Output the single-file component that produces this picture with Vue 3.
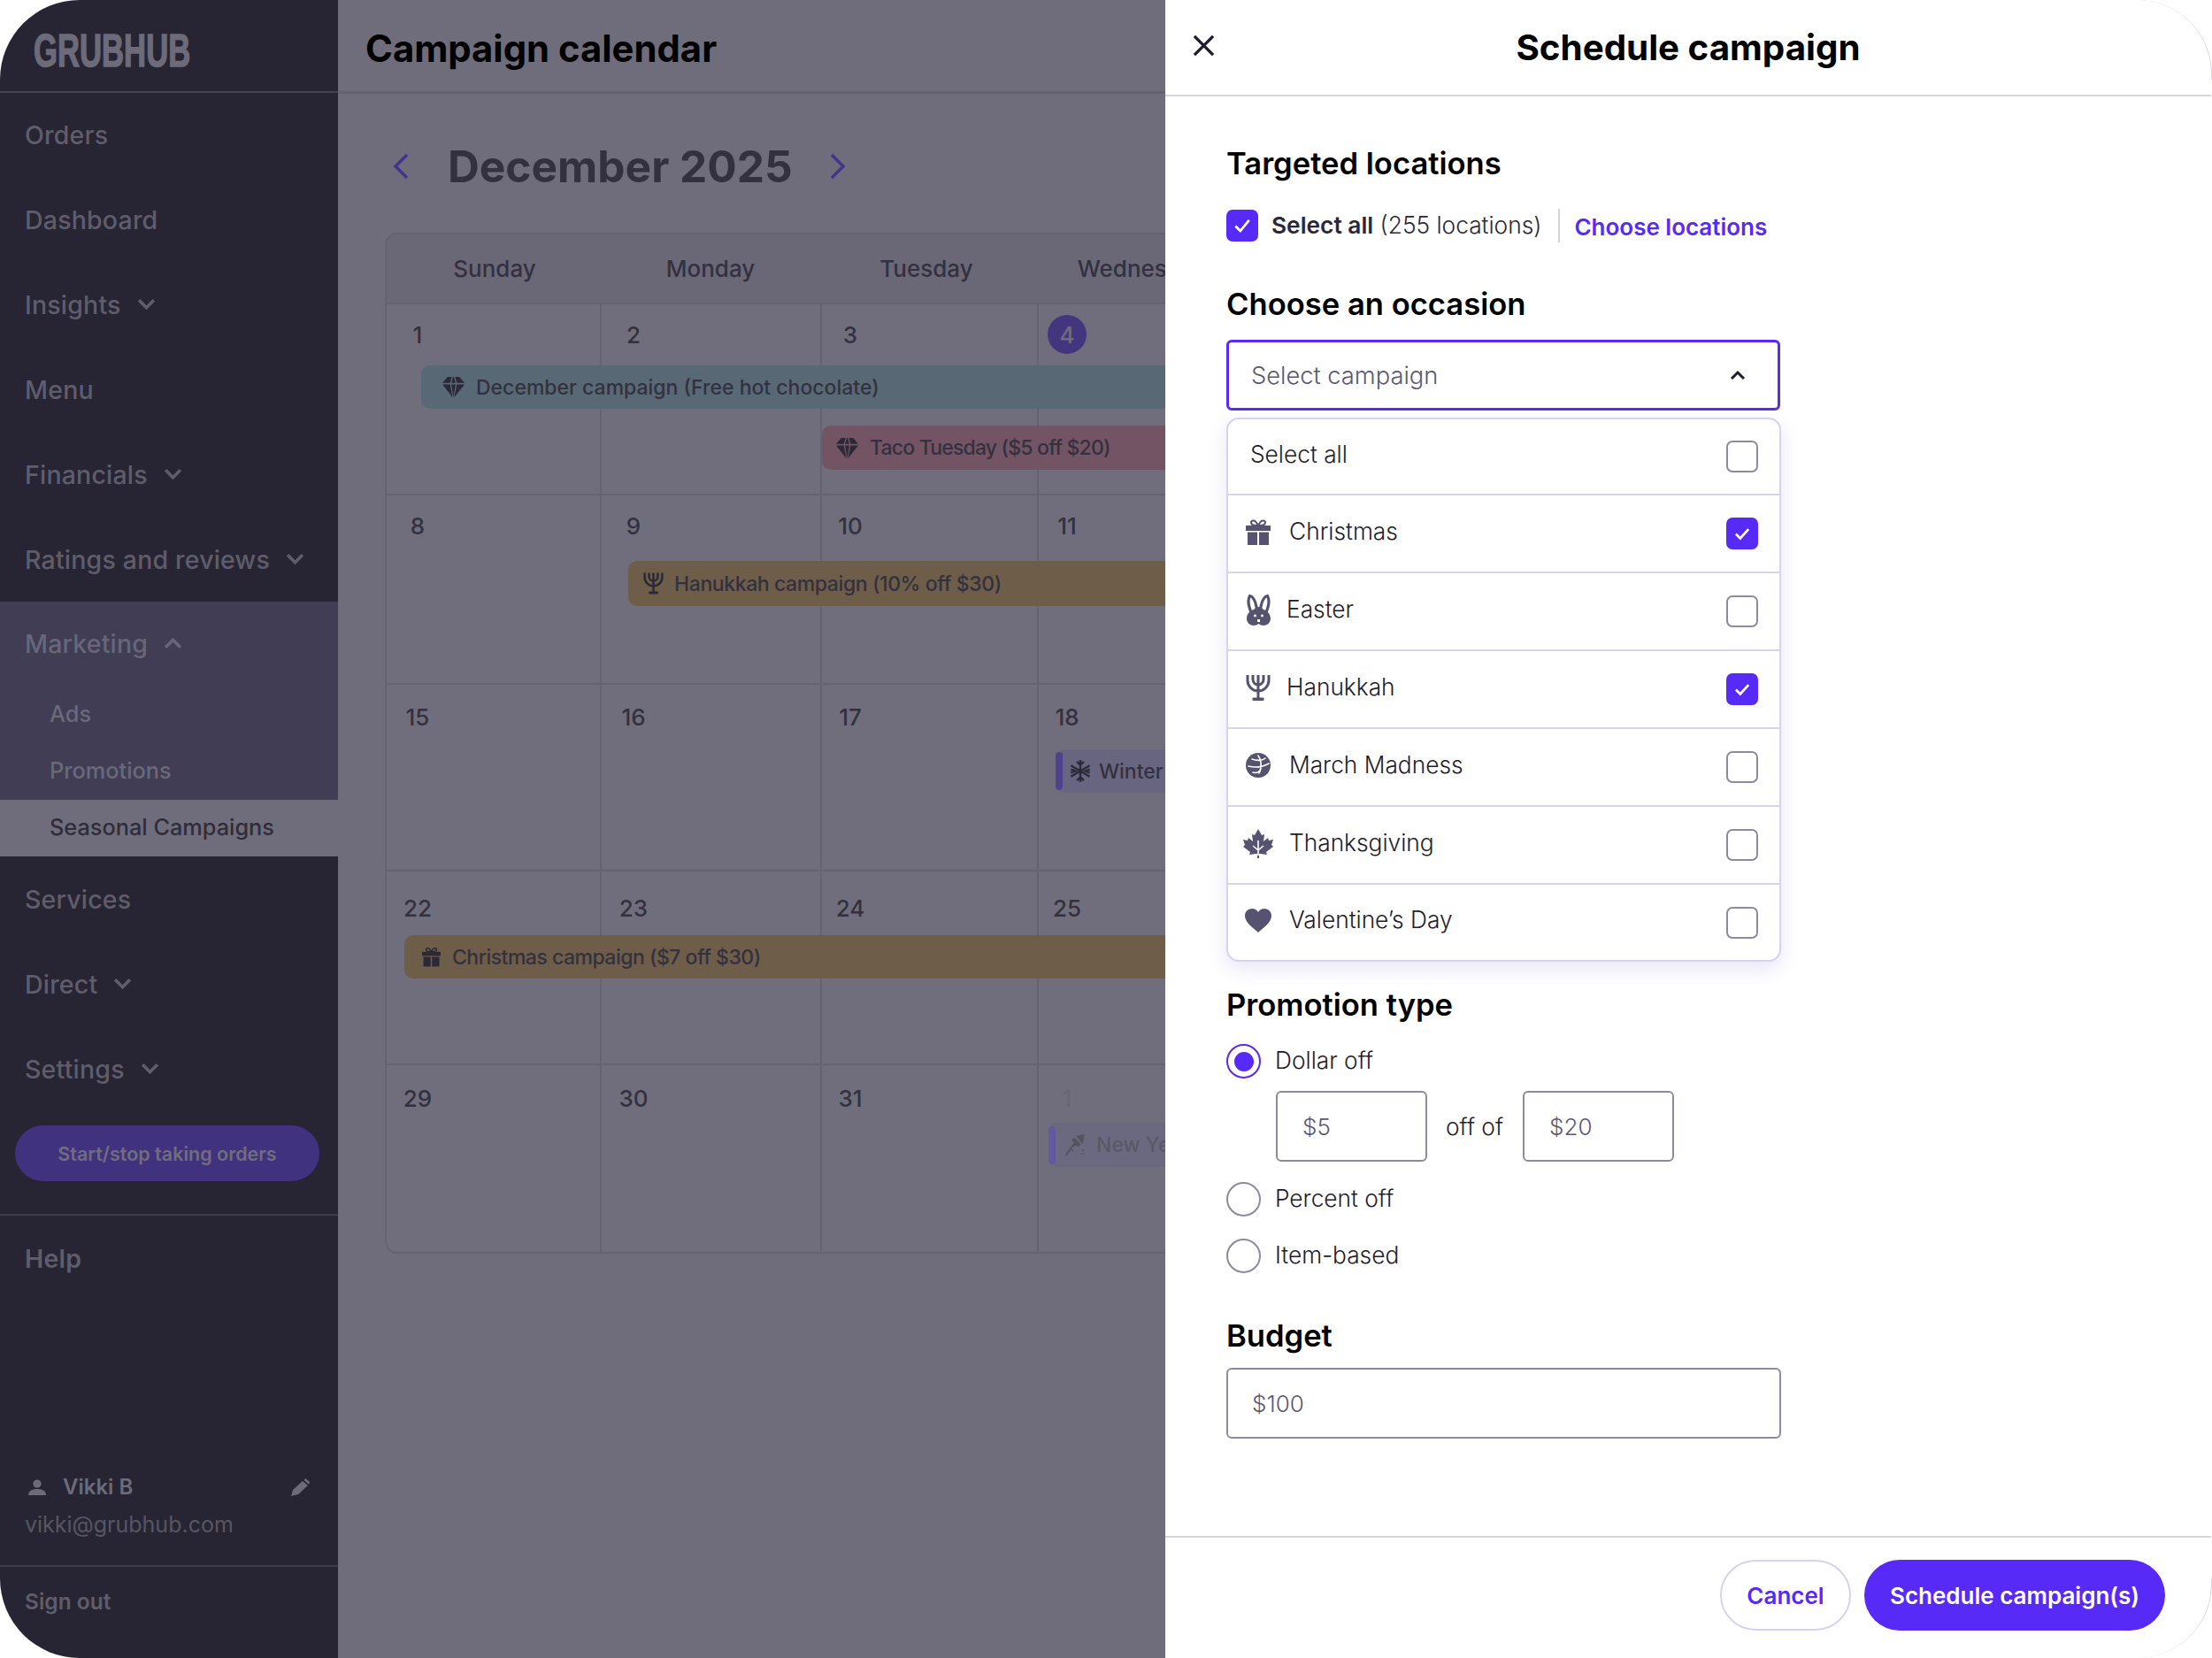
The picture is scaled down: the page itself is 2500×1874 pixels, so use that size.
<template>
  <div class="shell">
    <!-- SIDEBAR -->
    <aside class="sidebar">
      <div class="logo-row"><span class="logo">GRUBHUB</span></div>
      <nav class="nav">
        <template v-for="item in navTop" :key="item.label">
          <div class="nav-row" :class="{ 'nav-open': item.open }">
            <span>{{ item.label }}</span>
            <svg v-if="item.chevron" class="nav-chev" viewBox="0 0 20 13">
              <path :d="item.open ? 'M2 11l8-8 8 8' : 'M2 2l8 8 8-8'" />
            </svg>
          </div>
          <div v-if="item.open" class="subnav">
            <div class="sub-row">Ads</div>
            <div class="sub-row">Promotions</div>
            <div class="sub-row sub-active">Seasonal Campaigns</div>
          </div>
        </template>
      </nav>
      <div class="orders-wrap">
        <button class="orders-btn">Start/stop taking orders</button>
      </div>
      <div class="nav-row help">Help</div>
      <div class="side-space"></div>
      <div class="user-box">
        <div class="user-line">
          <svg class="user-icon" viewBox="0 0 20 18"><circle cx="10" cy="5" r="4.6" /><path d="M0 18c0-5 4-7 10-7s10 2 10 7z" /></svg>
          <span class="user-name">Vikki B</span>
          <svg class="pen-icon" viewBox="0 0 22 20"><path d="M0 20l2-7L13 3l6 5L8 18zM14.500 1.800l2-1.800 5 4.500-2 2z" /></svg>
        </div>
        <div class="user-mail">vikki@grubhub.com</div>
      </div>
      <div class="signout">Sign out</div>
    </aside>

    <!-- CALENDAR -->
    <main class="main">
      <header class="main-head"><h1>Campaign calendar</h1></header>
      <div class="month-row">
        <svg class="month-arrow" viewBox="0 0 18 30"><path d="M16 2L3 15l13 13" /></svg>
        <h2>December 2025</h2>
        <svg class="month-arrow" viewBox="0 0 18 30"><path d="M2 2l13 13L2 28" /></svg>
      </div>
      <div class="cal">
        <div class="cal-days">
          <div v-for="d in days" :key="d" class="cal-day">{{ d }}</div>
        </div>
        <div v-for="week in weeks" :key="week.nums[0]" class="week" :style="{ height: week.h + 'px' }">
          <div v-for="(n, i) in week.nums" :key="i" class="cell" :style="{ paddingTop: week.pad + 'px' }">
            <span class="num" :class="{ today: n === 4, faded: week.fadedLast && i === 3 }">{{ n }}</span>
          </div>
          <div
            v-for="ev in week.events"
            :key="ev.text"
            class="event"
            :class="ev.kind"
            :style="{ left: ev.left + 'px', top: ev.top + 'px', height: ev.h + 'px', background: ev.bg }"
          >
            <i v-if="ev.kind" class="event-bar"></i>
            <svg class="event-icon" :class="ev.icon" :style="{ marginLeft: ev.pad + 'px' }" :viewBox="icons[ev.icon].box" v-html="icons[ev.icon].body"></svg>
            <span :style="{ letterSpacing: (ev.ls || 0) + 'px' }">{{ ev.text }}</span>
          </div>
        </div>
      </div>
    </main>

    <!-- SCHEDULE PANEL -->
    <section class="panel">
      <header class="panel-head">
        <svg class="close" viewBox="0 0 26 26"><path d="M2 2l22 22M24 2L2 24" /></svg>
        <h3>Schedule campaign</h3>
      </header>
      <div class="panel-body">
        <h4 class="h-targeted">Targeted locations</h4>
        <div class="loc-row">
          <span class="check on big">
            <svg viewBox="0 0 20 20"><path d="M3 10.500l5 5L17 4.500" /></svg>
          </span>
          <span class="loc-text"><b>Select all</b> (255 locations)</span>
          <span class="loc-link">Choose locations</span>
        </div>

        <h4 class="h-occasion">Choose an occasion</h4>
        <div class="select">
          <span>Select campaign</span>
          <svg viewBox="0 0 18 12"><path d="M2 10l7-7 7 7" /></svg>
        </div>
        <div class="dropdown">
          <div v-for="o in occasions" :key="o.label" class="drop-row" :class="{ first: !o.icon }">
            <span v-if="o.icon" class="drop-icon">
              <svg :viewBox="icons[o.icon].box" :style="{ width: o.w + 'px' }" v-html="icons[o.icon].body"></svg>
            </span>
            <span class="drop-label" :style="{ marginLeft: o.gap + 'px' }">{{ o.label }}</span>
            <span class="check" :class="{ on: o.on }">
              <svg v-if="o.on" viewBox="0 0 20 20"><path d="M3.500 10.500l4.500 4.500 8.500-9.500" /></svg>
            </span>
          </div>
        </div>

        <h4 class="h-promo">Promotion type</h4>
        <div class="radio-row first">
          <span class="radio on"></span><span class="radio-label">Dollar off</span>
        </div>
        <div class="amount-row">
          <div class="field small">$5</div>
          <span class="off-of">off of</span>
          <div class="field small">$20</div>
        </div>
        <div class="radio-row second">
          <span class="radio"></span><span class="radio-label">Percent off</span>
        </div>
        <div class="radio-row third">
          <span class="radio"></span><span class="radio-label">Item-based</span>
        </div>

        <h4 class="h-budget">Budget</h4>
        <div class="field wide">$100</div>
      </div>
      <footer class="panel-foot">
        <button class="btn ghost">Cancel</button>
        <button class="btn solid">Schedule campaign(s)</button>
      </footer>
    </section>
  </div>
</template>

<script setup>
//ICONS
const icons = {
  gem: {
    box: '0 0 26 24',
    body: '<path d="M6 0h5L9 7H0zM15 0h5l6 7h-9zM12.500 0h1l2 7h-5zM0 9h9l3 15zM10.500 9h5L13 24zM17 9h9L14 24z"/>'
  },
  menorah: {
    box: '0 0 28 29',
    body: '<path fill="none" stroke="currentColor" stroke-width="3" d="M2 0v6a12 12 0 0 0 24 0V0M8 0v5a6 6 0 0 0 12 0V0M14 0v26"/><rect x="7.500" y="25.500" width="13" height="3.500" rx="1"/>'
  },
  gift: {
    box: '0 0 28 29',
    body: '<path fill="none" stroke="currentColor" stroke-width="2" d="M13 7C9 7 6 6 6 3.500 6 1 10 1 11 2.500 12.500 4.500 13 5 14 7c1-2 1.500-2.500 3-4.500C18 1 22 1 22 3.500 22 6 19 7 15 7"/><rect y="7" width="28" height="6"/><rect x="2" y="14.500" width="11" height="14.500"/><rect x="15" y="14.500" width="11" height="14.500"/>'
  },
  bunny: {
    box: '0 0 27 36',
    body: '<path fill="none" stroke="currentColor" stroke-width="3.200" d="M5 21C2 14 1 7 3.500 2.500 7 3 10 9 11.500 17M22 21c3-7 4-14 1.500-18.500C20 3 17 9 15.500 17"/><path d="M13.500 15c2 0 4 1 5.500 3 4 1 8 5 8 10 0 5-4 8-8 8-2.500 0-4-1-5.500-2-1.500 1-3 2-5.500 2-4 0-8-3-8-8 0-5 4-9 8-10 1.500-2 3.500-3 5.500-3z"/><circle cx="9.500" cy="25" r="1.400" fill="#fff"/><circle cx="17.500" cy="25" r="1.400" fill="#fff"/><path d="M12 29h3v3h-3z" fill="#fff"/>'
  },
  ball: {
    box: '0 0 28 28',
    body: '<circle cx="14" cy="14" r="14"/><path fill="none" stroke="#fff" stroke-width="1.600" stroke-linecap="round" d="M7 7c5 2 12 2 15-1M3 15c8 2 16 1 23-3M14 3c3 4 5 12 1 20M8 22c3 1 6 0 8-2"/>'
  },
  leaf: {
    box: '0 0 34 33',
    body: '<path d="M17 0l4 7 3-1-1 8 5-4 1 3 5-1-2 6 2 2-8 6 1 3-8-1h-4l-8 1 1-3-8-6 2-2-2-6 5 1 1-3 5 4-1-8 3 1z"/><path d="M16 22h2v11h-2z"/><path fill="none" stroke="#fff" stroke-width="1.600" d="M17 13v17M17 24l-6-5M17 24l6-5"/>'
  },
  heart: {
    box: '0 0 30 27',
    body: '<path d="M15 27C10 22 0 16 0 8 0 3 4 0 8 0c3 0 5.500 1.500 7 4 1.500-2.500 4-4 7-4 4 0 8 3 8 8 0 8-10 14-15 19z"/>'
  },
  flake: {
    box: '0 0 24 26',
    body: '<path fill="none" stroke="currentColor" stroke-width="2.400" d="M12 0v26M1 6.500l22 13M23 6.500l-22 13M8 2l4 4 4-4M8 24l4-4 4 4M1 11l5 2-5 2M23 11l-5 2 5 2"/>'
  },
  rocket: {
    box: '0 0 24 26',
    body: '<path d="M13 2l10-2-2 12z"/><path fill="none" stroke="currentColor" stroke-width="2" d="M12 10L1 25M15 12l-6 2"/><path d="M8 18l2 2M20 19h3M19 23h3" stroke="currentColor" stroke-width="1.500"/><path d="M11 4l8 8-3 3-8-8z"/>'
  }
}

//DATA
const navTop = [
  { label: 'Orders' },
  { label: 'Dashboard' },
  { label: 'Insights', chevron: true },
  { label: 'Menu' },
  { label: 'Financials', chevron: true },
  { label: 'Ratings and reviews', chevron: true },
  { label: 'Marketing', chevron: true, open: true },
  { label: 'Services' },
  { label: 'Direct', chevron: true },
  { label: 'Settings', chevron: true }
]

const days = ['Sunday', 'Monday', 'Tuesday', 'Wednesday', 'Thursday']

const weeks = [
  {
    h: 216,
    pad: 12,
    nums: [1, 2, 3, 4, 5],
    events: [
      { left: 39, top: 69, h: 49, pad: 24, bg: '#586875', icon: 'gem', text: 'December campaign (Free hot chocolate)' },
      { left: 492, top: 137, h: 50, pad: 16, ls: -0.8, bg: '#735464', icon: 'gem', text: 'Taco Tuesday ($5 off $20)' }
    ]
  },
  {
    h: 214,
    pad: 12,
    nums: [8, 9, 10, 11, 12],
    events: [{ left: 273, top: 74, h: 51, pad: 17, ls: -0.4, bg: '#6e5d48', icon: 'menorah', text: 'Hanukkah campaign (10% off $30)' }]
  },
  {
    h: 211,
    pad: 14,
    nums: [15, 16, 17, 18, 19],
    events: [{ left: 756, top: 73, h: 49, pad: 8, bg: '#686580', kind: 'tag', icon: 'flake', text: 'Winter campaign' }]
  },
  {
    h: 219,
    pad: 19,
    nums: [22, 23, 24, 25, 26],
    events: [{ left: 20, top: 72, h: 49, pad: 20, ls: -0.5, bg: '#6e5d48', icon: 'gift', text: 'Christmas campaign ($7 off $30)' }]
  },
  {
    h: 211,
    pad: 15,
    nums: [29, 30, 31, 1, 2],
    fadedLast: true,
    events: [{ left: 748, top: 65, h: 50, pad: 10, bg: '#6b6980', kind: 'tag faded-tag', icon: 'rocket', text: 'New Year campaign' }]
  }
]

const occasions = [
  { label: 'Select all', gap: 9 },
  { label: 'Christmas', icon: 'gift', w: 28, gap: 17, on: true },
  { label: 'Easter', icon: 'bunny', w: 27, gap: 14 },
  { label: 'Hanukkah', icon: 'menorah', w: 28, gap: 14, on: true },
  { label: 'March Madness', icon: 'ball', w: 28, gap: 17 },
  { label: 'Thanksgiving', icon: 'leaf', w: 34, gap: 17 },
  { label: 'Valentine’s Day', icon: 'heart', w: 30, gap: 17 }
]
</script>

<style>
html,
body {
  margin: 0;
  background: #fff;
}
</style>

<style scoped>
.shell {
  width: 2500px;
  height: 1874px;
  display: flex;
  overflow: hidden;
  font-family: Inter, "Liberation Sans", sans-serif;
  background: #fff;
}

/* sidebar */
.sidebar {
  width: 382px;
  flex: none;
  display: flex;
  flex-direction: column;
  background: #272533;
  color: #5f5d6c;
  border-radius: 90px 0 0 90px;
  font-size: 28.500px;
  font-weight: 500;
  letter-spacing: 0.2px;
}
.logo-row {
  height: 105px;
  flex: none;
  box-sizing: border-box;
  padding: 11px 0 0 38px;
  display: flex;
  align-items: center;
  border-bottom: 2px solid #454351;
}
.logo {
  font-family: "Liberation Sans", sans-serif;
  font-weight: 700;
  font-size: 51px;
  letter-spacing: 0;
  color: #6d6b79;
  transform: scaleX(0.68);
  transform-origin: left center;
  -webkit-text-stroke: 1.500px #6d6b79;
}
.nav-row {
  height: 96px;
  flex: none;
  box-sizing: border-box;
  padding-left: 28px;
  display: flex;
  align-items: center;
  gap: 18px;
}
.nav .nav-row:first-child {
  height: 95px;
}
.nav-open {
  background: #403d54;
  color: #68667a;
  padding-bottom: 2px;
}
.nav-chev {
  width: 21px;
  height: 14px;
  fill: none;
  stroke: currentColor;
  stroke-width: 3.500;
}
.subnav {
  background: #403d54;
  color: #6b6979;
  font-size: 25.300px;
  letter-spacing: 0;
}
.sub-row {
  height: 64px;
  box-sizing: border-box;
  padding: 0 0 3px 56px;
  display: flex;
  align-items: center;
}
.sub-active {
  background: #6f6d7b;
  color: #2f2d3b;
}
.orders-wrap {
  padding: 16px 21px 37px 17px;
  border-bottom: 2px solid #3f3d4b;
}
.orders-btn {
  width: 344px;
  height: 63px;
  display: block;
  border: none;
  border-radius: 32px;
  background: #40327e;
  color: #706e7c;
  font: 600 21.500px Inter, sans-serif;
}
.help {
  font-weight: 600;
}
.side-space {
  flex: 1;
}
.user-box {
  padding: 0 29px 31px 28px;
  border-bottom: 2px solid #3f3d4b;
}
.user-line {
  display: flex;
  align-items: center;
  font-weight: 600;
  font-size: 24px;
  letter-spacing: 0;
  color: #6d6b79;
  margin-bottom: 13px;
}
.user-icon {
  width: 20px;
  height: 18px;
  margin: 0 19px 0 4px;
  fill: #6d6b79;
}
.pen-icon {
  width: 22px;
  height: 20px;
  margin-left: auto;
  margin-right: 2px;
  fill: #6d6b79;
}
.user-mail {
  font-size: 25px;
  font-weight: 400;
  letter-spacing: 0;
  color: #575563;
}
.signout {
  height: 103px;
  box-sizing: border-box;
  padding: 24px 0 0 28px;
  font-weight: 600;
  font-size: 24.500px;
  letter-spacing: 0;
}

/* calendar */
.main {
  width: 935px;
  flex: none;
  overflow: hidden;
  background: #6f6d7b;
  color: #33313f;
}
.main-head {
  height: 106px;
  box-sizing: border-box;
  padding: 6px 0 0 31px;
  display: flex;
  align-items: center;
  border-bottom: 3px solid #64626f;
}
h1 {
  margin: 0;
  font-size: 41.800px;
  font-weight: 700;
  color: #000;
}
.month-row {
  height: 157px;
  box-sizing: border-box;
  padding: 6px 0 0 62px;
  display: flex;
  align-items: center;
  gap: 44px;
}
.month-row h2 {
  margin: 0 -2px 0 0;
  font-size: 49.600px;
  font-weight: 700;
}
.month-arrow {
  width: 18px;
  height: 30px;
  fill: none;
  stroke: #43358a;
  stroke-width: 3.500;
}
.cal {
  width: 1225px;
  margin-left: 53px;
  border: 2px solid #65636f;
  border-radius: 14px 0 0 14px;
  background: #706e7c;
  overflow: hidden;
}
.cal-days {
  display: grid;
  grid-template-columns: repeat(5, 244px);
  height: 77px;
  background: #6a6876;
  border-bottom: 2px solid #65636f;
}
.cal-day,
.cell {
  box-sizing: border-box;
}
.cal-day {
  display: flex;
  align-items: center;
  justify-content: center;
  font-size: 26px;
  font-weight: 500;
}
.week {
  position: relative;
  display: grid;
  grid-template-columns: 243px 249px 245px 245px 245px;
  border-bottom: 2px solid #65636f;
  box-sizing: border-box;
}
.week:last-child {
  border-bottom: none;
}
.cell {
  border-right: 2px solid #65636f;
  padding-left: 13px;
}
.cell:nth-child(2) {
  padding-left: 14px;
}
.cell:nth-child(3),
.cell:nth-child(4) {
  padding-left: 10px;
}
.num {
  width: 44px;
  height: 44px;
  display: flex;
  align-items: center;
  justify-content: center;
  border-radius: 50%;
  font-size: 26px;
  font-weight: 500;
}
.today {
  background: #44357f;
  color: #6f6d7b;
}
.faded {
  color: #696775;
}
.event {
  position: absolute;
  right: -400px;
  display: flex;
  align-items: center;
  border-radius: 10px 0 0 10px;
  font-size: 23px;
  font-weight: 500;
  color: #33313f;
}
.event-icon {
  width: 25px;
  height: 25px;
  margin-right: 13px;
  fill: currentColor;
  color: #2b2937;
  flex: none;
}
.event-icon.gift {
  width: 21px;
}
.event-icon.menorah {
  width: 23px;
  margin-right: 12px;
}
.tag .event-icon {
  width: 24px;
  margin-right: 9px;
}
.event-bar {
  width: 8px;
  height: 43px;
  flex: none;
  border-radius: 4px;
  background: #50418f;
}
.faded-tag {
  color: #5a5866;
}
.faded-tag .event-bar {
  background: #6259a0;
}
.faded-tag .event-icon {
  color: #55535f;
  margin-right: 12px;
}

/* panel */
.panel {
  position: relative;
  flex: 1;
  display: flex;
  flex-direction: column;
  box-sizing: border-box;
  background: #fff;
  border-right: 1px solid #d9d8e0;
  border-radius: 0 84px 84px 0;
  color: #2a2838;
}
.panel::after {
  content: "";
  position: absolute;
  top: 90px;
  bottom: 90px;
  right: -1px;
  width: 1px;
  background: #fff;
}
.panel-head {
  position: relative;
  height: 109px;
  flex: none;
  box-sizing: border-box;
  display: flex;
  align-items: center;
  justify-content: center;
  border-bottom: 2px solid #d6d5dd;
}
.close {
  position: absolute;
  left: 31px;
  top: 39px;
  width: 25px;
  height: 25px;
  fill: none;
  stroke: #1f1d2b;
  stroke-width: 3.500;
}
.panel-head h3 {
  margin: 0;
  font-size: 40.300px;
  font-weight: 700;
  color: #000;
}
.panel-body {
  flex: 1;
  padding-left: 69px;
  font-size: 26px;
  font-weight: 300;
}
h4 {
  margin: 0;
  font-size: 34.600px;
  font-weight: 600;
  line-height: 44px;
  color: #000;
}
.h-targeted {
  margin-top: 53px;
}
.loc-row {
  display: flex;
  align-items: center;
  margin-top: 30px;
  height: 38px;
}
.loc-text {
  margin-left: 15px;
  padding-right: 19px;
  font-size: 26.300px;
  line-height: 38px;
  border-right: 2px solid #d6d5dd;
}
.loc-text b {
  font-weight: 600;
}
.loc-link {
  margin-left: 16px;
  padding-top: 3px;
  color: #572af8;
  font-weight: 600;
  font-size: 26px;
}
.check {
  width: 36px;
  height: 36px;
  flex: none;
  box-sizing: border-box;
  border: 2px solid #8c8aa0;
  border-radius: 7px;
  display: flex;
  align-items: center;
  justify-content: center;
  margin-left: auto;
}
.check.on {
  background: #572af8;
  border-color: #572af8;
}
.check.big {
  margin-left: 0;
}
.check svg {
  width: 22px;
  height: 22px;
  fill: none;
  stroke: #fff;
  stroke-width: 2.500;
}
.h-occasion {
  margin-top: 47px;
}
.select {
  width: 626px;
  height: 80px;
  margin-top: 19px;
  box-sizing: border-box;
  border: 3.500px solid #572af8;
  border-radius: 6px;
  padding: 0 36px 0 25px;
  display: flex;
  align-items: center;
  justify-content: space-between;
  color: #5a5873;
  font-size: 27.300px;
}
.select svg {
  width: 18px;
  height: 12px;
  fill: none;
  stroke: #1f1d2b;
  stroke-width: 3;
}
.dropdown {
  width: 627px;
  margin-top: 8px;
  box-sizing: border-box;
  border: 2px solid #d6d3f0;
  border-radius: 14px;
  background: #fff;
  box-shadow: 0 8px 22px rgba(87, 70, 190, 0.14);
}
.drop-row {
  height: 88px;
  box-sizing: border-box;
  padding: 0 24px 0 16px;
  display: flex;
  align-items: center;
  border-bottom: 2px solid #d6d3f0;
  color: #1f1d2b;
}
.drop-row:last-child {
  height: 85px;
  border-bottom: none;
}
.drop-row.first {
  height: 86px;
}
.drop-icon {
  width: 36px;
  flex: none;
  margin-bottom: 4px;
  display: flex;
  justify-content: center;
  color: #555370;
  fill: #555370;
}
.drop-icon svg {
  display: block;
}
.drop-label {
  margin-bottom: 6px;
  font-size: 26.300px;
}
.h-promo {
  margin-top: 26px;
}
.radio-row {
  display: flex;
  align-items: center;
  gap: 16px;
  height: 39px;
  font-size: 26.300px;
  color: #1f1d2b;
}
.radio-label {
  margin-bottom: 3px;
}
.radio-row.first {
  margin-top: 23px;
}
.radio-row.second {
  margin-top: 23px;
}
.radio-row.third {
  margin-top: 25px;
}
.radio {
  width: 39px;
  height: 39px;
  box-sizing: border-box;
  border: 2px solid #8c8aa0;
  border-radius: 50%;
  display: flex;
  align-items: center;
  justify-content: center;
}
.radio.on {
  border-color: #572af8;
}
.radio.on::after {
  content: "";
  width: 22px;
  height: 22px;
  border-radius: 50%;
  background: #572af8;
}
.amount-row {
  display: flex;
  align-items: center;
  margin: 14px 0 0 56px;
}
.off-of {
  margin: 0 22px 0 21px;
  font-size: 26.300px;
  color: #1f1d2b;
}
.field {
  height: 80px;
  box-sizing: border-box;
  border: 2px solid #8c8aa0;
  border-radius: 6px;
  display: flex;
  align-items: center;
  color: #5a5873;
}
.field.small {
  width: 171px;
  padding-left: 28px;
}
.field.wide {
  width: 627px;
  margin-top: 15px;
  padding-left: 27px;
}
.h-budget {
  margin-top: 48px;
}
.panel-foot {
  height: 138px;
  flex: none;
  box-sizing: border-box;
  display: flex;
  justify-content: flex-end;
  gap: 15px;
  padding: 25px 52px 0 0;
  border-top: 2px solid #d6d5dd;
}
.btn {
  height: 80px;
  border-radius: 40px;
  font: 600 26px Inter, sans-serif;
}
.ghost {
  width: 148px;
  background: #fff;
  border: 2px solid #d6d3f0;
  color: #572af8;
}
.solid {
  width: 340px;
  background: #572af8;
  border: none;
  color: #fff;
}
</style>
